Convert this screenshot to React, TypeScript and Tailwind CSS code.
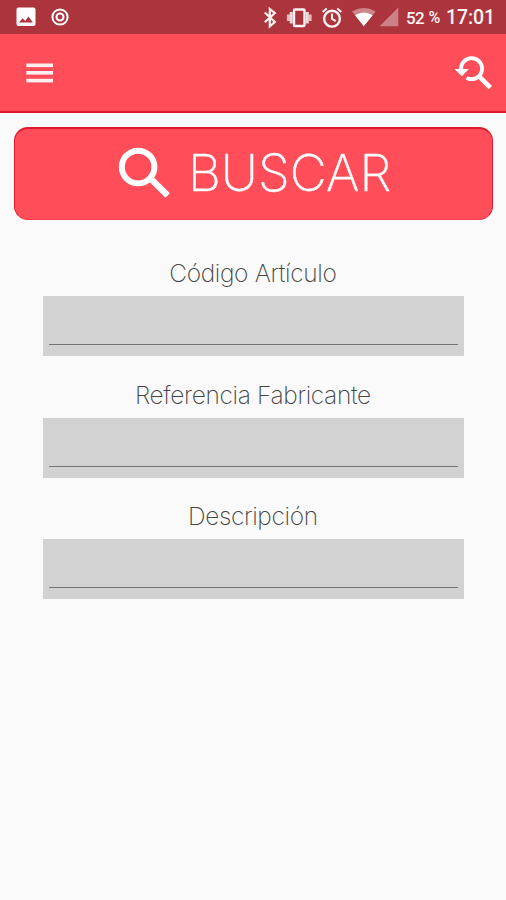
import React from "react";

function StatusBar() {
  return (
    <div className="flex h-[34px] items-center bg-[#ac343c] pr-[11px] pl-4 text-[#fff4f4]">
      <svg className="h-[20px] w-[20px]" viewBox="0 0 20 20">
        <rect x="0.5" y="0.5" width="19" height="18.5" rx="2" fill="#fff" />
        <path d="M3 15.5l3.7-4.2 2.5 2.6 3.2-4.5 4.5 6.1z" fill="#ac343c" />
      </svg>
      <svg className="ml-[14.5px] h-[18px] w-[18px]" viewBox="0 0 18 18" fill="none" stroke="#fff">
        <circle cx="9" cy="9" r="7.6" strokeWidth="2" />
        <circle cx="9" cy="9" r="3.5" strokeWidth="2.1" />
      </svg>
      <svg className="ml-auto h-[24px] w-[140px] shrink-0" viewBox="0 0 140 24" fill="none" stroke="#fff4f4">
        <path d="M1.8 7.5l10 9.5-5 4.4V4l5 4-10 9.3" strokeWidth="2.2" />
        <rect x="31" y="4.5" width="10.5" height="16.5" rx="1" strokeWidth="2.4" />
        <path d="M28.2 7v11.5M44.3 7v11.5" strokeWidth="3" opacity=".85" />
        <path d="M25.4 9.5v6.5M47.1 9.5v6.5" strokeWidth="3" opacity=".7" />
        <circle cx="69" cy="13.7" r="7.9" strokeWidth="2.4" />
        <path d="M69 8.5v5.4l3.8 2.3M59.6 7l4.2-3.6M78.4 7l-4.2-3.6" strokeWidth="2" />
        <path d="M89 6.4Q100.8-.5 112.6 6.4L100.8 21z" fill="#fff" opacity=".4" stroke="none" />
        <path d="M92 10.3Q100.8 4.8 109.6 10.3L100.8 21.3z" fill="#fff" stroke="none" />
        <path d="M135.3 2.5V21.3h-18.7z" fill="#fff" opacity=".38" stroke="none" />
      </svg>
      <span className="ml-[3px] flex w-[36px] shrink-0 gap-[4.5px] pt-0.5 text-[17px] leading-[34px] font-medium tracking-[-0.7px] whitespace-nowrap">
        52 <span className="inline-block origin-left text-[16px]">%</span>
      </span>
      <span className="ml-[4px] w-[49px] shrink-0 pt-0.5 text-[19.5px] leading-[34px] font-medium tracking-[-0.1px] whitespace-nowrap">17:01</span>
    </div>
  );
}

function Header() {
  return (
    <header className="flex h-[79px] items-start justify-between border-b-2 border-[#df1930] bg-[#ff4e59] pr-[13px] pl-[26px]">
      <button aria-label="Menú" className="mt-[29px]">
        <svg className="block h-[20px] w-[27px]" viewBox="0 0 27 20" fill="#fff0f0">
          <rect y="0.5" x="0.3" width="26.7" height="3.6" />
          <rect y="8" x="0.3" width="26.7" height="3.6" />
          <rect y="15.8" x="0.3" width="26.7" height="3.6" />
        </svg>
      </button>
      <button aria-label="Reiniciar búsqueda" className="mt-[20px]">
        <svg className="block h-[38px] w-[38px]" viewBox="0 0 38 38" fill="none" stroke="#fff">
          <path d="M6.2 16.2A10.5 10.5 0 1 1 11.6 23.9" strokeWidth="3.9" />
          <path d="M-0.4 15.1h14.2L6.8 22.2z" fill="#fff" stroke="none" />
          <path d="M23.6 21.8L35.4 33.7" strokeWidth="4.6" />
        </svg>
      </button>
    </header>
  );
}

function SearchField({ label }: { label: string }) {
  return (
    <label className="block h-[121.5px]">
      <span className="block h-[45px] pr-px text-center text-[24.5px] leading-[45px] font-extralight tracking-[-0.35px] text-[#444]">{label}</span>
      <span className="flex h-[60px] items-end bg-[#d2d2d2] px-[6px] pb-[11px]">
        <input className="h-[44px] w-full border-b border-[#747474] bg-transparent outline-none" />
      </span>
    </label>
  );
}

export default function App() {
  return (
    <div className="h-[900px] w-[506px] overflow-hidden bg-[#fafafa] font-['Roboto',sans-serif]">
      <StatusBar />
      <Header />
      <main className="px-[14px] pt-[14px] font-['Inter','Liberation_Sans',sans-serif]">
        <button className="flex h-[93px] w-[479px] items-center rounded-[14px] border-x border-t-2 border-b border-[#df1930] border-b-[#f53a48] bg-[#ff4e59] pl-[103px] text-white">
          <svg className="h-[54px] w-[54px] shrink-0" viewBox="0 0 54 54" fill="none" stroke="#fff">
            <circle cx="20.1" cy="20" r="16.3" strokeWidth="6" />
            <path d="M32.5 31.5L49.7 48.6" strokeWidth="6.4" />
          </svg>
          <span className="ml-[16px] pb-0.5 text-[51px] leading-[60px] font-extralight [-webkit-text-stroke:0.4px_#fff4f4]">BUSCAR</span>
        </button>
        <form className="mt-[31px] ml-[28.6px] w-[421.5px]">
          <SearchField label="Código Artículo" />
          <SearchField label="Referencia Fabricante" />
          <SearchField label="Descripción" />
        </form>
      </main>
    </div>
  );
}
